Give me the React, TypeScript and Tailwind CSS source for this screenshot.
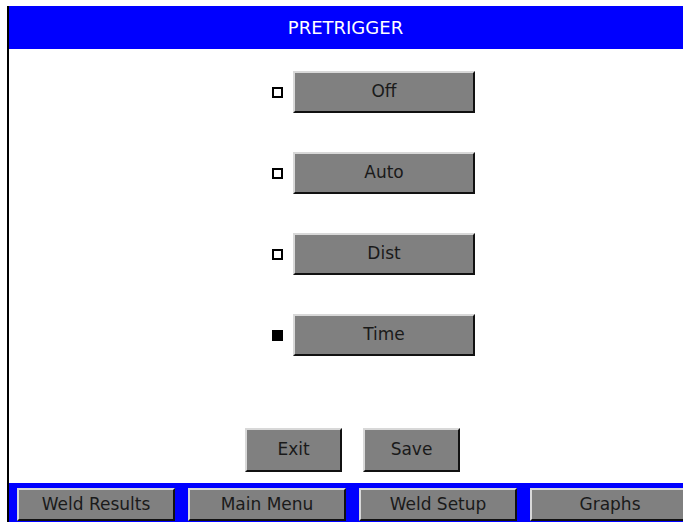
import React from 'react';

const OPTIONS = [
  { label: 'Off', checked: false },
  { label: 'Auto', checked: false },
  { label: 'Dist', checked: false },
  { label: 'Time', checked: true },
];

const NAV = ['Weld Results', 'Main Menu', 'Weld Setup', 'Graphs'];

// raised grey panel-style button
const btn =
  'bg-[#808080] border-t-2 border-l-2 border-t-[#d8d8d8] border-l-[#d8d8d8] border-b-2 border-r-2 border-b-[#111] border-r-[#111] text-[#1a1a1a] flex items-center justify-center';

export default function App() {
  return (
    <div className="w-[683px] h-[522px] bg-white pt-[6px] pl-[7px] flex font-['DejaVu_Sans',sans-serif] overflow-hidden">
      <div className="flex-1 flex flex-col border-l-2 border-black">
        {/* Header */}
        <div className="h-[43px] bg-[#0000ff] text-white text-[18px] flex items-center justify-center pr-[8px]">
          PRETRIGGER
        </div>

        {/* Options */}
        <div className="flex-1 flex flex-col">
          <div className="flex flex-col gap-[39px] pt-[22px] pl-[263px]">
            {OPTIONS.map((o) => (
              <div key={o.label} className="flex items-center gap-[10px]">
                <span
                  className={
                    o.checked
                      ? 'w-[11px] h-[11px] bg-black'
                      : 'w-[11px] h-[11px] border-2 border-black bg-white'
                  }
                />
                <button className={`${btn} w-[182px] h-[42px] text-[17px]`}>{o.label}</button>
              </div>
            ))}
          </div>

          <div className="flex gap-[21px] pl-[236px] mt-auto mb-[11px]">
            <button className={`${btn} w-[97px] h-[44px] text-[17px]`}>Exit</button>
            <button className={`${btn} w-[97px] h-[44px] text-[17px]`}>Save</button>
          </div>
        </div>

        {/* Bottom nav */}
        <div className="h-[39px] bg-[#0000ff] flex items-start gap-[13px] pl-[8px] pt-[5px]">
          {NAV.map((n, i) => (
            <button
              key={n}
              className={`${btn} ${i === 3 ? 'w-[160px]' : 'w-[158px]'} h-[33px] text-[17px]`}
            >
              {n}
            </button>
          ))}
        </div>
      </div>
    </div>
  );
}
